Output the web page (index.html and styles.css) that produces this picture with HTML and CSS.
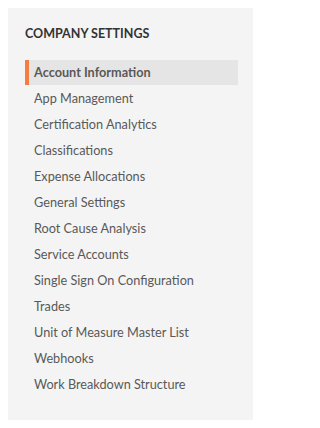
FILE: index.html
```html
<!DOCTYPE html>
<html lang="en">
<head>
<meta charset="utf-8">
<title>Company Settings</title>
<link rel="stylesheet" href="styles.css">
</head>
<body>
<nav class="panel">
  <h2 class="panel-title">COMPANY SETTINGS</h2>
  <ul class="menu">
    <li class="menu-item active">Account Information</li>
    <li class="menu-item">App Management</li>
    <li class="menu-item">Certification Analytics</li>
    <li class="menu-item">Classifications</li>
    <li class="menu-item">Expense Allocations</li>
    <li class="menu-item">General Settings</li>
    <li class="menu-item">Root Cause Analysis</li>
    <li class="menu-item">Service Accounts</li>
    <li class="menu-item">Single Sign On Configuration</li>
    <li class="menu-item">Trades</li>
    <li class="menu-item">Unit of Measure Master List</li>
    <li class="menu-item">Webhooks</li>
    <li class="menu-item">Work Breakdown Structure</li>
  </ul>
</nav>
</body>
</html>
```

FILE: styles.css
```css
html, body {
  margin: 0;
  padding: 0;
  background: #ffffff;
}
body {
  padding: 8px 8px 8px 8px;
  font-family: Lato, "Open Sans", sans-serif;
  color: #4a4a4a;
}
.panel {
  box-sizing: border-box;
  width: 245px;
  height: 412px;
  background: #f4f4f4;
  padding: 18px 15px 0 17px;
}
.panel-title {
  margin: 0;
  font-size: 12.5px;
  line-height: 16px;
  font-weight: 700;
  color: #333333;
}
.menu {
  list-style: none;
  margin: 18px 0 0 0;
  padding: 0;
  display: flex;
  flex-direction: column;
  gap: 1px;
}
.menu-item {
  height: 25px;
  line-height: 25px;
  font-size: 12.7px;
  padding-left: 9px;
  color: #595959;
  white-space: nowrap;
}
.menu-item.active {
  background: #e5e5e5;
  border-left: 4px solid #f47e42;
  padding-left: 5px;
  font-weight: 700;
}
```
